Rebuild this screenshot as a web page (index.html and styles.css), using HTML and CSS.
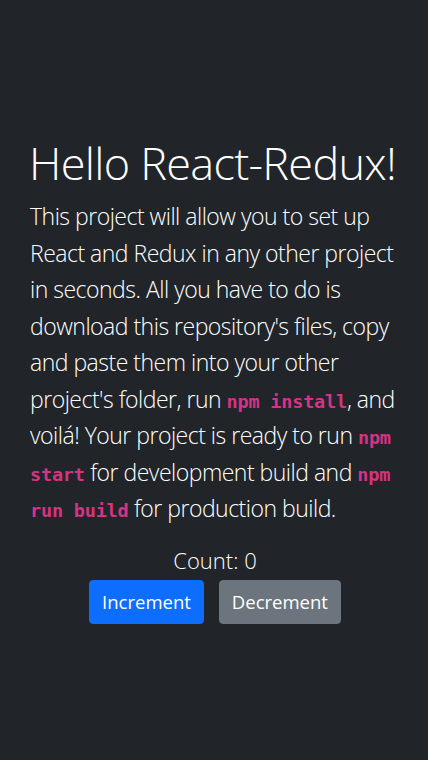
FILE: index.html
```html
<!DOCTYPE html>
<html lang="en">
<head>
<meta charset="utf-8">
<title>Hello React-Redux!</title>
<link rel="stylesheet" href="styles.css">
</head>
<body>
<main class="page">
  <div class="content">
    <h1 class="title">Hello React-Redux!</h1>
    <p class="lead">This project will allow you to set up React and Redux in any other project in seconds. All you have to do is download this repository's files, copy and paste them into your other project's folder, run <code>npm install</code>, and voilá! Your project is ready to run <code>npm start</code> for development build and <code>npm run build</code> for production build.</p>
    <div class="counter">
      <div class="count">Count: 0</div>
      <div class="actions">
        <button class="btn btn-primary">Increment</button>
        <button class="btn btn-secondary">Decrement</button>
      </div>
    </div>
  </div>
</main>
</body>
</html>
```
FILE: styles.css
```css
* { box-sizing: border-box; }
html, body { margin: 0; padding: 0; }
body {
  background: #212529;
  color: #fff;
  font-family: "Open Sans", "Noto Sans", sans-serif;
}
.page {
  min-height: 760px;
  display: flex;
  align-items: center;
  padding: 0 28px 0 30px;
}
.content { width: 100%; }
.title {
  margin: 0 0 8px -1px;
  font-size: 45px;
  font-weight: 300;
  line-height: 1.2;
  letter-spacing: -0.7px;
  white-space: nowrap;
}
.lead {
  margin: 0 0 16px;
  font-size: 23px;
  font-weight: 300;
  line-height: 36.5px;
  letter-spacing: -0.5px;
}
code {
  font-family: "DejaVu Sans Mono", "Liberation Mono", monospace;
  font-size: 18.5px;
  font-weight: 700;
  line-height: 1;
  color: #d63384;
  letter-spacing: -0.2px;
}
.counter {
  display: flex;
  flex-direction: column;
  align-items: center;
  gap: 3px;
}
.count {
  font-size: 22px;
  font-weight: 300;
  line-height: 34px;
}
.actions {
  display: flex;
  gap: 15px;
}
.btn {
  font-family: inherit;
  font-size: 18.5px;
  font-weight: 400;
  line-height: 30px;
  padding: 6px 12px;
  border: 1px solid transparent;
  border-radius: 4px;
  color: #fff;
  cursor: pointer;
}
.btn-primary { background: #0d6efd; border-color: #0d6efd; }
.btn-secondary { background: #6c757d; border-color: #6c757d; }
```
